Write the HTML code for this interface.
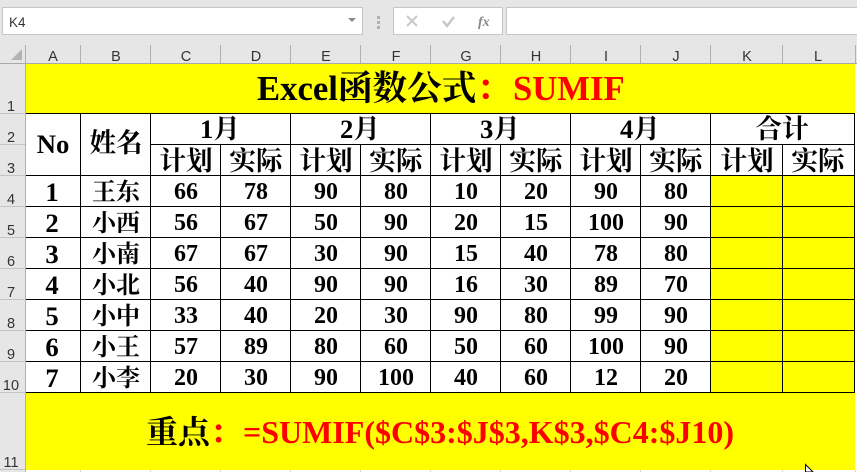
<!DOCTYPE html>
<html><head><meta charset="utf-8"><style>
html,body{margin:0;padding:0;background:#e6e6e6;overflow:hidden}
svg{display:block}
.h{font-family:"Liberation Sans",sans-serif;font-size:14.5px;fill:#333;text-anchor:middle}
.s{font-family:"Liberation Serif","Noto Serif CJK SC",serif;font-weight:700;fill:#000;text-anchor:middle}
.n{font-size:24px}.c{font-size:26.67px}.m{font-size:24px}
.r{fill:#f00}
</style></head><body>
<svg width="857" height="472" viewBox="0 0 857 472" xmlns="http://www.w3.org/2000/svg">
<rect width="857" height="472" fill="#e6e6e6"/>
<!-- toolbar -->
<rect x="2.5" y="7.5" width="360" height="27" fill="#fff" stroke="#c6c6c6"/>
<text x="9" y="27" font-family="Liberation Sans,sans-serif" font-size="13.5" fill="#333">K4</text>
<path d="M348 18h8l-4 4z" fill="#8a8a8a"/>
<rect x="377" y="16" width="3" height="3" fill="#b0b0b0"/><rect x="377" y="21" width="3" height="3" fill="#b0b0b0"/><rect x="377" y="26" width="3" height="3" fill="#b0b0b0"/>
<rect x="393.5" y="7.5" width="109" height="27" fill="#fff" stroke="#c6c6c6"/>
<path d="M407 16l10 10M417 16l-10 10" stroke="#c8c8c8" stroke-width="2" fill="none"/>
<path d="M443 21l4 5 7-9" stroke="#c8c8c8" stroke-width="2.5" fill="none"/>
<text x="478" y="26" font-family="Liberation Serif,serif" font-style="italic" font-weight="700" font-size="14" fill="#8a8a8a">fx</text>
<rect x="506.5" y="7.5" width="352" height="27" fill="#fff" stroke="#c6c6c6"/>
<!-- column header -->
<rect x="0" y="63" width="857" height="1" fill="#a8a8a8"/>
<path d="M11 60L22 49V60z" fill="#b4b4b4"/>
<g fill="#b0b0b0">
<rect x="25" y="45" width="1" height="427"/>
<rect x="80" y="45" width="1" height="18"/><rect x="150" y="45" width="1" height="18"/><rect x="220" y="45" width="1" height="18"/><rect x="290" y="45" width="1" height="18"/><rect x="360" y="45" width="1" height="18"/><rect x="430" y="45" width="1" height="18"/><rect x="500" y="45" width="1" height="18"/><rect x="570" y="45" width="1" height="18"/><rect x="640" y="45" width="1" height="18"/><rect x="710" y="45" width="1" height="18"/><rect x="782" y="45" width="1" height="18"/><rect x="855" y="45" width="1" height="18"/>
</g>
<g class="h">
<text class="h" x="53" y="61">A</text><text class="h" x="116" y="61">B</text><text class="h" x="186" y="61">C</text><text class="h" x="256" y="61">D</text><text class="h" x="326" y="61">E</text><text class="h" x="396" y="61">F</text><text class="h" x="466" y="61">G</text><text class="h" x="536" y="61">H</text><text class="h" x="606" y="61">I</text><text class="h" x="676" y="61">J</text><text class="h" x="747" y="61">K</text><text class="h" x="818" y="61">L</text>
<text class="h" x="11" y="111">1</text><text class="h" x="11" y="142">2</text><text class="h" x="11" y="173">3</text><text class="h" x="11" y="204">4</text><text class="h" x="11" y="235">5</text><text class="h" x="11" y="266">6</text><text class="h" x="11" y="297">7</text><text class="h" x="11" y="328">8</text><text class="h" x="11" y="359">9</text><text class="h" x="11" y="390">10</text><text class="h" x="11" y="467">11</text>
</g>
<g fill="#c4c4c4">
<rect x="0" y="113" width="25" height="1"/><rect x="0" y="144" width="25" height="1"/><rect x="0" y="175" width="25" height="1"/><rect x="0" y="206" width="25" height="1"/><rect x="0" y="237" width="25" height="1"/><rect x="0" y="268" width="25" height="1"/><rect x="0" y="299" width="25" height="1"/><rect x="0" y="330" width="25" height="1"/><rect x="0" y="361" width="25" height="1"/><rect x="0" y="392" width="25" height="1"/><rect x="0" y="469" width="25" height="1"/>
</g>
<!-- sheet -->
<rect x="26" y="64" width="831" height="408" fill="#fff"/>
<rect x="26" y="64" width="829" height="49" fill="#ff0"/>
<rect x="26" y="393" width="829" height="77" fill="#ff0"/>
<rect x="711" y="176" width="144" height="216" fill="#ff0"/>
<rect x="855" y="64" width="2" height="406" fill="#fff"/>
<!-- grid lines -->
<g fill="#000">
<rect x="26" y="113" width="829" height="1"/>
<rect x="151" y="144" width="704" height="1"/>
<rect x="26" y="175" width="829" height="1"/>
<rect x="26" y="206" width="829" height="1"/><rect x="26" y="237" width="829" height="1"/><rect x="26" y="268" width="829" height="1"/><rect x="26" y="299" width="829" height="1"/><rect x="26" y="330" width="829" height="1"/><rect x="26" y="361" width="829" height="1"/>
<rect x="26" y="392" width="829" height="1"/>
<rect x="80" y="113" width="1" height="279"/><rect x="150" y="113" width="1" height="279"/>
<rect x="220" y="144" width="1" height="248"/><rect x="290" y="113" width="1" height="279"/>
<rect x="360" y="144" width="1" height="248"/><rect x="430" y="113" width="1" height="279"/>
<rect x="500" y="144" width="1" height="248"/><rect x="570" y="113" width="1" height="279"/>
<rect x="640" y="144" width="1" height="248"/><rect x="710" y="113" width="1" height="279"/>
<rect x="782" y="144" width="1" height="248"/><rect x="854" y="113" width="1" height="279"/>
</g>
<g fill="#d4d4d4"><rect x="80" y="470" width="1" height="2"/><rect x="150" y="470" width="1" height="2"/><rect x="220" y="470" width="1" height="2"/><rect x="290" y="470" width="1" height="2"/><rect x="360" y="470" width="1" height="2"/><rect x="430" y="470" width="1" height="2"/><rect x="500" y="470" width="1" height="2"/><rect x="570" y="470" width="1" height="2"/><rect x="640" y="470" width="1" height="2"/><rect x="710" y="470" width="1" height="2"/><rect x="782" y="470" width="1" height="2"/><rect x="855" y="470" width="1" height="2"/></g>
<!-- title -->
<text class="s" x="257" y="100" style="font-size:34.67px;text-anchor:start">Excel函数公式<tspan fill="#f00">：</tspan></text>
<text class="s" x="513" y="100" fill="#f00" style="font-size:34.67px;text-anchor:start;fill:#f00">SUMIF</text>
<!-- headers -->
<g>
<text class="s c" x="53" y="153">No</text><text class="s c" x="116" y="152">姓名</text>
<text class="s c" x="220" y="138">1月</text><text class="s c" x="360" y="138">2月</text><text class="s c" x="500" y="138">3月</text><text class="s c" x="640" y="138">4月</text><text class="s c" x="782" y="138">合计</text>
<text class="s c" x="186" y="170">计划</text><text class="s c" x="256" y="170">实际</text><text class="s c" x="326" y="170">计划</text><text class="s c" x="396" y="170">实际</text><text class="s c" x="466" y="170">计划</text><text class="s c" x="536" y="170">实际</text><text class="s c" x="606" y="170">计划</text><text class="s c" x="676" y="170">实际</text><text class="s c" x="747" y="170">计划</text><text class="s c" x="818" y="170">实际</text>
</g>
<!-- rows -->
<g>
<text class="s c" x="52" y="201">1</text><text class="s m" x="116" y="200">王东</text><text class="s n" x="186" y="199">66</text><text class="s n" x="256" y="199">78</text><text class="s n" x="326" y="199">90</text><text class="s n" x="396" y="199">80</text><text class="s n" x="466" y="199">10</text><text class="s n" x="536" y="199">20</text><text class="s n" x="606" y="199">90</text><text class="s n" x="676" y="199">80</text>
<text class="s c" x="52" y="232">2</text><text class="s m" x="116" y="231">小西</text><text class="s n" x="186" y="230">56</text><text class="s n" x="256" y="230">67</text><text class="s n" x="326" y="230">50</text><text class="s n" x="396" y="230">90</text><text class="s n" x="466" y="230">20</text><text class="s n" x="536" y="230">15</text><text class="s n" x="606" y="230">100</text><text class="s n" x="676" y="230">90</text>
<text class="s c" x="52" y="263">3</text><text class="s m" x="116" y="262">小南</text><text class="s n" x="186" y="261">67</text><text class="s n" x="256" y="261">67</text><text class="s n" x="326" y="261">30</text><text class="s n" x="396" y="261">90</text><text class="s n" x="466" y="261">15</text><text class="s n" x="536" y="261">40</text><text class="s n" x="606" y="261">78</text><text class="s n" x="676" y="261">80</text>
<text class="s c" x="52" y="294">4</text><text class="s m" x="116" y="293">小北</text><text class="s n" x="186" y="292">56</text><text class="s n" x="256" y="292">40</text><text class="s n" x="326" y="292">90</text><text class="s n" x="396" y="292">90</text><text class="s n" x="466" y="292">16</text><text class="s n" x="536" y="292">30</text><text class="s n" x="606" y="292">89</text><text class="s n" x="676" y="292">70</text>
<text class="s c" x="52" y="325">5</text><text class="s m" x="116" y="324">小中</text><text class="s n" x="186" y="323">33</text><text class="s n" x="256" y="323">40</text><text class="s n" x="326" y="323">20</text><text class="s n" x="396" y="323">30</text><text class="s n" x="466" y="323">90</text><text class="s n" x="536" y="323">80</text><text class="s n" x="606" y="323">99</text><text class="s n" x="676" y="323">90</text>
<text class="s c" x="52" y="356">6</text><text class="s m" x="116" y="355">小王</text><text class="s n" x="186" y="354">57</text><text class="s n" x="256" y="354">89</text><text class="s n" x="326" y="354">80</text><text class="s n" x="396" y="354">60</text><text class="s n" x="466" y="354">50</text><text class="s n" x="536" y="354">60</text><text class="s n" x="606" y="354">100</text><text class="s n" x="676" y="354">90</text>
<text class="s c" x="52" y="387">7</text><text class="s m" x="116" y="386">小李</text><text class="s n" x="186" y="385">20</text><text class="s n" x="256" y="385">30</text><text class="s n" x="326" y="385">90</text><text class="s n" x="396" y="385">100</text><text class="s n" x="466" y="385">40</text><text class="s n" x="536" y="385">60</text><text class="s n" x="606" y="385">12</text><text class="s n" x="676" y="385">20</text>
</g>
<!-- bottom -->
<text class="s" x="146" y="443" style="font-size:32px;text-anchor:start">重点<tspan fill="#f00">：</tspan></text>
<text class="s" x="243" y="443" style="font-size:32px;text-anchor:start;fill:#f00">=SUMIF($C$3:$J$3,K$3,$C4:$J10)</text>
<!-- cursor -->
<path d="M805.5 464.5V472H813L805.5 464.5z" fill="#fff" stroke="#000"/>
</svg>
</body></html>
